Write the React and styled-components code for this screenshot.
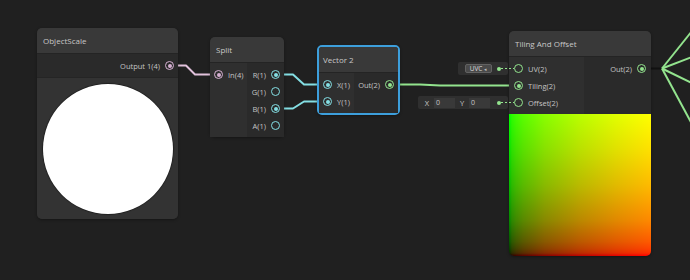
import React from 'react'
import styled, { createGlobalStyle } from 'styled-components'

const PINK = '#d6b0d2'
const CYAN = '#84dfe4'
const GREEN = '#93e48e'

const nodes = [
  {
    id: 'scale',
    title: 'ObjectScale',
    x: 37, y: 28, w: 141,
    outputs: [{ label: 'Output 1(4)', color: PINK, on: true }],
    preview: 'circle',
  },
  {
    id: 'split',
    title: 'Split',
    x: 210, y: 37, w: 74, inW: 37,
    inputs: [{ label: 'In(4)', color: PINK, on: true }],
    outputs: [
      { label: 'R(1)', color: CYAN, on: true },
      { label: 'G(1)', color: CYAN },
      { label: 'B(1)', color: CYAN, on: true },
      { label: 'A(1)', color: CYAN },
    ],
  },
  {
    id: 'vec2',
    title: 'Vector 2',
    x: 317, y: 45, w: 83, inW: 35, selected: true,
    inputs: [
      { label: 'X(1)', color: CYAN, on: true },
      { label: 'Y(1)', color: CYAN, on: true },
    ],
    outputs: [{ label: 'Out(2)', color: GREEN, on: true }],
  },
  {
    id: 'tiling',
    title: 'Tiling And Offset',
    x: 509, y: 31, w: 142, inW: 75, pad: 5,
    inputs: [
      { label: 'UV(2)', color: GREEN, field: 'uv' },
      { label: 'Tiling(2)', color: GREEN, on: true },
      { label: 'Offset(2)', color: GREEN, field: 'xy' },
    ],
    outputs: [{ label: 'Out(2)', color: GREEN, on: true }],
    preview: 'uv',
  },
]

const wires = [
  { d: 'M169.5 65.5 H186 L195 74.5 H217.5', color: '#e2c2dc' },
  { d: 'M275.5 74.5 H293 L304 84.5 H327.5', color: CYAN },
  { d: 'M275.5 108.5 H293 L304 101.5 H327.5', color: CYAN },
  { d: 'M389.5 84.5 H420 L440 85.5 H518.5', color: GREEN },
  { d: 'M641.5 68.5 H662', color: '#111111' },
  { d: 'M662 68.5 L692 31', color: GREEN },
  { d: 'M662 68.5 L692 57', color: GREEN },
  { d: 'M662 68.5 L692 83', color: GREEN },
  { d: 'M662 68.5 L692 124', color: GREEN },
]

const UvField = () => (
  <FieldBox $w={50} $pad={7}>
    <Dropdown>UVC<Caret>◂</Caret></Dropdown>
    <FieldDot />
    <FieldDash />
  </FieldBox>
)

const XyField = () => (
  <FieldBox $w={90} $pad={2}>
    <Axis>X</Axis>
    <NumBox>0</NumBox>
    <Axis>Y</Axis>
    <NumBox>0</NumBox>
    <FieldDot />
    <FieldDash />
  </FieldBox>
)

const Slot = ({ slot, side }) => (
  <SlotRow $side={side}>
    {slot.field === 'uv' && <UvField />}
    {slot.field === 'xy' && <XyField />}
    <Port $color={slot.color} $on={slot.on} />
    <SlotLabel>{slot.label}</SlotLabel>
  </SlotRow>
)

const GraphNode = ({ node }) => (
  <NodeBox $x={node.x} $y={node.y} $w={node.w} $selected={node.selected}>
    <Title $selected={node.selected}>{node.title}</Title>
    <Body>
      {node.inputs && (
        <Inputs $w={node.inW} $pad={node.pad || 4}>
          {node.inputs.map(s => <Slot key={s.label} slot={s} side="in" />)}
        </Inputs>
      )}
      <Outputs $pad={node.pad || 4}>
        {node.outputs.map(s => <Slot key={s.label} slot={s} side="out" />)}
      </Outputs>
    </Body>
    {node.preview === 'circle' && (
      <Preview>
        <Sphere />
      </Preview>
    )}
    {node.preview === 'uv' && <UvPreview />}
  </NodeBox>
)

const App = () => (
  <>
    <GlobalStyle />
    <Canvas>
      <Wires width="690" height="280">
        {wires.map((w, i) => (
          <path key={i} d={w.d} stroke={w.color} strokeWidth="2" fill="none" strokeLinejoin="round" />
        ))}
      </Wires>
      {nodes.map(n => <GraphNode key={n.id} node={n} />)}
    </Canvas>
  </>
)

export default App

const GlobalStyle = createGlobalStyle`
  html, body {
    margin: 0;
    padding: 0;
    background: #202020;
  }
  body {
    font-family: 'Open Sans', 'Noto Sans', sans-serif;
  }
`
const Canvas = styled.div`
  position: relative;
  width: 690px;
  height: 280px;
  overflow: hidden;
  background: #202020;
`
const Wires = styled.svg`
  position: absolute;
  left: 0;
  top: 0;
`
const NodeBox = styled.div`
  position: absolute;
  left: ${p => p.$x}px;
  top: ${p => p.$y}px;
  width: ${p => p.$w}px;
  box-sizing: border-box;
  display: flex;
  flex-direction: column;
  background: #2c2c2c;
  border-radius: 5px;
  border: ${p => (p.$selected ? '2px solid #3d9fdc' : 'none')};
  box-shadow: 0 1px 3px rgba(0, 0, 0, 0.35);
`
const Title = styled.div`
  height: 25px;
  display: flex;
  align-items: center;
  padding: 0 ${p => (p.$selected ? 4 : 6)}px;
  background: #393939;
  color: #c8c8c8;
  font-size: 8px;
  border-bottom: 1px solid #242424;
  border-radius: ${p => (p.$selected ? '3px 3px 0 0' : '5px 5px 0 0')};
`
const Body = styled.div`
  display: flex;
`
const Inputs = styled.div`
  width: ${p => p.$w}px;
  flex: none;
  box-sizing: border-box;
  padding: 3px 0 3px ${p => p.$pad}px;
  background: #2f2f2f;
`
const Outputs = styled.div`
  flex: 1;
  display: flex;
  flex-direction: column;
  align-items: flex-end;
  padding: 3px ${p => p.$pad}px 3px 0;
  background: #2a2a2a;
`
const SlotRow = styled.div`
  position: relative;
  height: 17px;
  display: flex;
  align-items: center;
  gap: 5px;
  flex-direction: ${p => (p.$side === 'out' ? 'row-reverse' : 'row')};
`
const Port = styled.span`
  width: 9px;
  height: 9px;
  flex: none;
  box-sizing: border-box;
  border-radius: 50%;
  border: 1.5px solid ${p => p.$color};
  display: flex;
  align-items: center;
  justify-content: center;
  &::after {
    content: '';
    display: ${p => (p.$on ? 'block' : 'none')};
    width: 4px;
    height: 4px;
    border-radius: 50%;
    background: ${p => p.$color};
  }
`
const SlotLabel = styled.span`
  font-size: 7.5px;
  color: #c4c4c4;
  white-space: nowrap;
`
const Preview = styled.div`
  height: 141px;
  border-top: 1px solid #252525;
  background: #333333;
  border-radius: 0 0 5px 5px;
  display: flex;
  align-items: center;
  justify-content: center;
`
const Sphere = styled.div`
  width: 130px;
  height: 130px;
  border-radius: 50%;
  background: #ffffff;
  box-shadow: 0 0 1px 0.5px #111;
`
const UvPreview = styled.div`
  height: 142px;
  border-radius: 0 0 5px 5px;
  background:
    linear-gradient(to right, rgb(0,0,0) 0%, rgb(43,0,0) 2%, rgb(65,0,0) 5%, rgb(89,0,0) 10%, rgb(136,0,0) 25%, rgb(186,0,0) 50%, rgb(224,0,0) 75%, rgb(255,0,0) 100%),
    linear-gradient(to top, rgb(0,0,0) 0%, rgb(0,43,0) 2%, rgb(0,65,0) 5%, rgb(0,89,0) 10%, rgb(0,136,0) 25%, rgb(0,186,0) 50%, rgb(0,224,0) 75%, rgb(0,255,0) 100%);
  background-blend-mode: screen;
`
const FieldBox = styled.div`
  position: absolute;
  right: calc(100% + 6px);
  top: 2px;
  width: ${p => p.$w}px;
  height: 13px;
  box-sizing: border-box;
  display: flex;
  align-items: center;
  padding-left: ${p => p.$pad}px;
  background: #2f2f2f;
  border-radius: 2px;
`
const Dropdown = styled.div`
  width: 27px;
  height: 9px;
  box-sizing: border-box;
  display: flex;
  align-items: center;
  justify-content: center;
  gap: 2px;
  background: #4a4a4a;
  border: 1px solid #626262;
  border-radius: 2px;
  font-size: 6.5px;
  color: #dcdcdc;
`
const Caret = styled.span`
  font-size: 5px;
  color: #bdbdbd;
`
const Axis = styled.span`
  width: 14px;
  text-align: center;
  font-size: 7.5px;
  color: #c8c8c8;
`
const NumBox = styled.span`
  width: 21px;
  height: 10px;
  line-height: 10px;
  box-sizing: border-box;
  padding-left: 2px;
  background: #393939;
  font-size: 7px;
  color: #c8c8c8;
`
const FieldDot = styled.span`
  width: 4px;
  height: 4px;
  margin-left: auto;
  flex: none;
  border-radius: 50%;
  background: ${GREEN};
`
const FieldDash = styled.span`
  width: 13px;
  height: 1px;
  margin-right: -6px;
  flex: none;
  background: repeating-linear-gradient(to right, ${GREEN} 0 2px, transparent 2px 4px);
`
